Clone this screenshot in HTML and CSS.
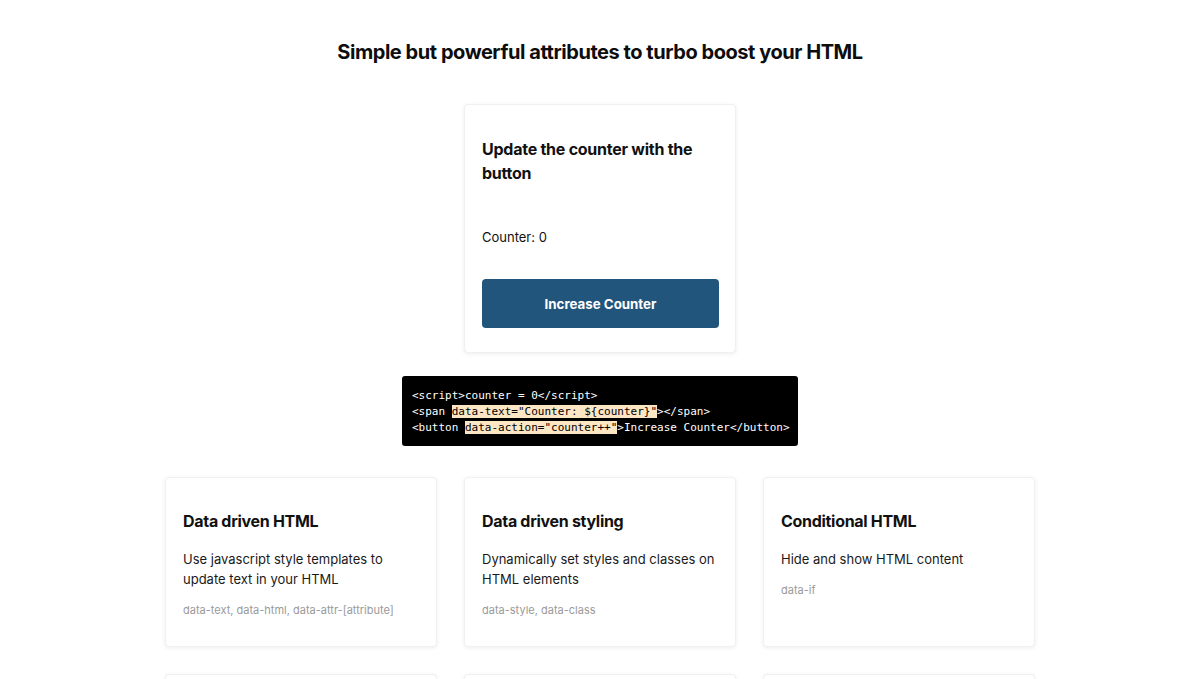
FILE: index.html
```html
<!DOCTYPE html>
<html>
<head>
<meta charset="utf-8">
<link rel="stylesheet" href="styles.css">
</head>
<body>
<main class="page">
  <h1 class="title">Simple but powerful attributes to turbo boost your HTML</h1>
  <section class="card demo">
    <h3 class="demo-title">Update the counter with the button</h3>
    <p class="counter">Counter: 0</p>
    <button class="btn">Increase Counter</button>
  </section>
  <pre class="code">&lt;script&gt;counter = 0&lt;/script&gt;
&lt;span <mark class="hl">data-text="Counter: ${counter}"</mark>&gt;&lt;/span&gt;
&lt;button <mark class="hl">data-action="counter++"</mark>&gt;Increase Counter&lt;/button&gt;</pre>
  <section class="grid">
    <div class="card feature">
      <h3 class="f-title">Data driven HTML</h3>
      <p class="f-desc">Use javascript style templates to update text in your HTML</p>
      <p class="f-tags">data-text, data-html, data-attr-[attribute]</p>
    </div>
    <div class="card feature">
      <h3 class="f-title">Data driven styling</h3>
      <p class="f-desc">Dynamically set styles and classes on HTML elements</p>
      <p class="f-tags">data-style, data-class</p>
    </div>
    <div class="card feature">
      <h3 class="f-title">Conditional HTML</h3>
      <p class="f-desc">Hide and show HTML content</p>
      <p class="f-tags">data-if</p>
    </div>
    <div class="card feature"></div>
    <div class="card feature"></div>
    <div class="card feature"></div>
  </section>
</main>
</body>
</html>
```
FILE: styles.css
```css
* { box-sizing: border-box; }
html, body { margin: 0; padding: 0; background: #fff; }
body {
  font-family: Inter, "Liberation Sans", Arial, sans-serif;
  color: #111;
  -webkit-font-smoothing: antialiased;
}
.page {
  display: flex;
  flex-direction: column;
  align-items: center;
  padding-top: 39px;
}
.title {
  margin: 0;
  font-size: 20px;
  line-height: 26px;
  font-weight: 700;
  letter-spacing: -0.45px;
  color: #0d0d0d;
}
.card {
  background: #fff;
  border-radius: 4px;
  border: 1px solid #f0f0f0;
  box-shadow: 0 1px 4px rgba(0,0,0,0.07);
}
.demo {
  margin-top: 39px;
  width: 272px;
  padding: 32px 17px 24px;
}
.demo-title {
  margin: 0;
  font-size: 16px;
  line-height: 24px;
  font-weight: 700;
  letter-spacing: -0.25px;
}
.counter {
  margin: 42px 0 0;
  font-size: 13px;
  line-height: 20px;
}
.btn {
  display: block;
  margin-top: 32px;
  width: 237px;
  height: 49px;
  border: 0;
  border-radius: 4px;
  background: #21557b;
  color: #fff;
  font-family: inherit;
  font-size: 13.3px;
  font-weight: 700;
}
.code {
  margin: 23px 0 0;
  width: 396px;
  height: 70px;
  background: #000;
  color: #fff;
  border-radius: 3px;
  padding: 12px 10px 0;
  font-family: "DejaVu Sans Mono", "Liberation Mono", monospace;
  font-size: 11px;
  line-height: 16px;
}
.hl {
  background: #fde6c4;
  color: #000;
}
.grid {
  margin-top: 31px;
  display: grid;
  grid-template-columns: repeat(3, 272px);
  column-gap: 27px;
  row-gap: 27px;
}
.feature {
  height: 170px;
  padding: 31px 17px 20px;
}
.f-title {
  margin: 0;
  font-size: 16px;
  line-height: 24px;
  font-weight: 700;
  letter-spacing: -0.3px;
}
.f-desc {
  margin: 16px 0 0;
  font-size: 13px;
  line-height: 20px;
  color: #1a1a1a;
}
.f-tags {
  margin: 12px 0 0;
  font-size: 11px;
  line-height: 18px;
  color: #9a9a9a;
}
```
